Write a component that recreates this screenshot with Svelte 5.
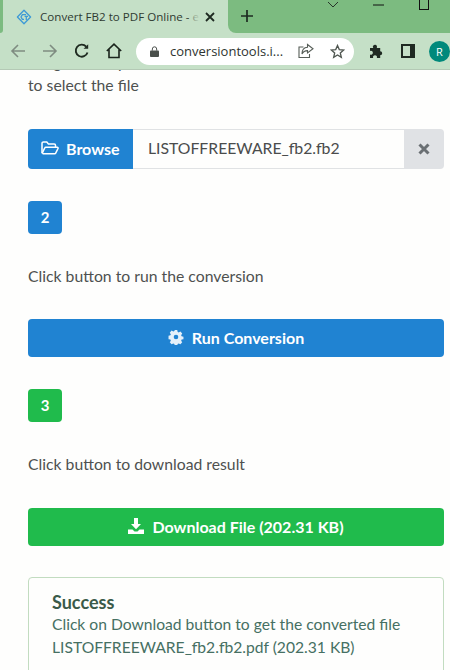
<script lang="ts">
  const fileName = 'LISTOFFREEWARE_fb2.fb2';
</script>

<div class="window">
  <header class="chrome">
    <div class="tabstrip">
      <div class="tab-edge"></div>
      <div class="tab">
        <svg class="favicon" viewBox="0 0 16 16" width="16" height="16" fill="none" stroke="#3d9ad6" stroke-width="1.3" stroke-linejoin="round">
          <path d="M8 1.200 14.600 8 8 14.800 1.400 8Z" />
          <path d="M10 5.600H6.400L5 8l1.400 2.400H8M8.600 7.400H12M10.300 7.400v3.600" />
        </svg>
        <span class="tab-title">Convert FB2 to PDF Online - e</span>
        <svg class="tab-close" viewBox="0 0 10 10" width="10" height="10" stroke="#1f2a22" stroke-width="1.8">
          <path d="M1 1l8 8M9 1l-8 8" />
        </svg>
      </div>
      <div class="tab-rest">
        <svg class="newtab" viewBox="0 0 12 12" width="12" height="12" stroke="#1d2b20" stroke-width="1.7">
          <path d="M6 0v12M0 6h12" />
        </svg>
        <div class="winctl">
          <svg viewBox="0 0 12 6" width="12" height="6" fill="none" stroke="#28352a" stroke-width="1"><path d="M1 0l5 5 5-5" /></svg>
          <svg class="minimize" viewBox="0 0 11 2" width="11" height="2" stroke="#111"><path d="M0 1h11" /></svg>
          <span class="maximize"></span>
        </div>
      </div>
    </div>
    <div class="toolbar">
      <svg class="navicon" viewBox="0 0 16 16" width="16" height="16" fill="none" stroke="#7f8c81" stroke-width="1.6">
        <path d="M15 8H2M8 2 2 8l6 6" />
      </svg>
      <svg class="navicon" viewBox="0 0 16 16" width="16" height="16" fill="none" stroke="#7f8c81" stroke-width="1.6">
        <path d="M1 8h13M8 2l6 6-6 6" />
      </svg>
      <svg class="navicon" viewBox="0 0 16 16" width="16" height="16" fill="none" stroke="#1e2a20" stroke-width="1.9">
        <path d="M13.500 9.500A6 6 0 1 1 12.200 3.600" />
        <path d="M14.200 1.200v4.600H9.600Z" fill="#1e2a20" stroke="none" />
      </svg>
      <svg class="navicon home" viewBox="0 0 16 16" width="16" height="16" fill="none" stroke="#1a241c" stroke-width="1.6">
        <path d="M.8 8 8 1.200 15.200 8M3 6.500v8h10v-8" />
      </svg>
      <div class="omnibox">
        <svg class="lock" viewBox="0 0 10 12" width="9" height="11" fill="#4a4f4b">
          <path d="M1 5h8a1 1 0 0 1 1 1v5a1 1 0 0 1-1 1H1a1 1 0 0 1-1-1V6a1 1 0 0 1 1-1Z" />
          <path d="M2.600 5V3.200a2.400 2.400 0 0 1 4.800 0V5" fill="none" stroke="#4a4f4b" stroke-width="1.1" />
        </svg>
        <span class="url">conversiontools.i...</span>
        <svg class="share" viewBox="0 0 16 16" width="16" height="16" fill="none" stroke="#565d57" stroke-width="1.1">
          <path d="M5.500 4H1v10.500h10.500V11" />
          <path d="M9.500 1.500 15 5.800 9.500 10V7.600C6.500 7.600 5 9 4 11c0-4 2-6.500 5.500-6.700Z" />
        </svg>
        <svg class="star" viewBox="0 0 16 16" width="15" height="15" fill="none" stroke="#4f5650" stroke-width="1.4">
          <path d="M8 1.600 9.900 6l4.700.4-3.600 3.100 1.100 4.700L8 11.700l-4.100 2.500L5 9.500 1.400 6.400 6.100 6Z" />
        </svg>
      </div>
      <svg class="ext" viewBox="0 0 16 16" width="16" height="16" fill="#1f2a22">
        <path d="M1 5h3.200a2 2 0 0 1 3.600-2.200c.3.700.2 1.500 0 2.200h3.400v3.200a2 2 0 1 1 0 4V15H7.800a2 2 0 1 0-3.600 0H1v-3.400a2 2 0 1 0 0-3.600Z" />
      </svg>
      <svg class="panel" viewBox="0 0 14 14" width="14" height="14">
        <path d="M0 0h14v14H0Z" fill="#1f2a22" />
        <path d="M2 2h7v10H2Z" fill="#c5e0c7" />
      </svg>
      <span class="avatar">R</span>
    </div>
  </header>

  <main class="viewport">
    <div class="page">
      <p class="hint">Drag and drop file or click here<br />to select the file</p>

      <div class="file-row">
        <button class="browse">
          <svg viewBox="0 0 18 14" width="18" height="14" fill="none" stroke="#fff" stroke-width="1.5">
            <path d="M1 12V2.400C1 1.600 1.600 1 2.400 1h3.400l1.600 2h5.800c.8 0 1.300.6 1.300 1.300V6" />
            <path d="M1 12.600 3.700 7c.2-.5.6-.8 1.200-.8h11.300c.7 0 1.100.7.8 1.300l-2.300 4.600c-.2.400-.6.600-1 .6H1.600" />
          </svg>
          Browse
        </button>
        <span class="file-name">{fileName}</span>
        <span class="clear">
          <svg viewBox="0 0 12 12" width="12" height="12" stroke="#6a6f73" stroke-width="3">
            <path d="M1.500 1.500l9 9M10.500 1.500l-9 9" />
          </svg>
        </span>
      </div>

      <span class="step blue">2</span>
      <p class="label">Click button to run the conversion</p>
      <button class="action blue">
        <svg viewBox="-1 -1 18 18" width="16" height="16">
          <path fill="#e4f0fa" fill-rule="evenodd" d="M6.600 0h2.800l.4 2.200 1.200.6 2-1 2 2.300-1.200 1.800.5 1.200 2.100.5v2.800l-2.100.5-.5 1.200 1.200 1.800-2 2.300-2-1-1.200.6-.4 2.200H6.600l-.4-2.200-1.200-.6-2 1-2-2.300 1.200-1.800-.5-1.200-2.100-.5V6.600l2.100-.5.5-1.200L1 3.100l2-2.300 2 1 1.200-.6ZM8 5.400a2.600 2.600 0 1 0 0 5.200 2.600 2.600 0 0 0 0-5.200Z" />
        </svg>
        Run Conversion
      </button>

      <span class="step green">3</span>
      <p class="label second">Click button to download result</p>
      <button class="action green">
        <svg viewBox="0 0 16 16" width="16" height="16" fill="#fff">
          <path d="M6 0h4v6h3l-5 5.200L3 6h3Z" />
          <path d="M0 11.500h4.500l2 2h3l2-2H16V16H0Z" />
        </svg>
        Download File (202.31 KB)
      </button>

      <section class="alert">
        <h4>Success</h4>
        <p>Click on Download button to get the converted file<br />{fileName}.pdf (202.31 KB)</p>
      </section>
    </div>
  </main>
</div>

<style>
  :global(body) {
    margin: 0;
    background: #fefefd;
  }
  .window {
    width: 450px;
    height: 670px;
    overflow: hidden;
    font-family: Lato, "Liberation Sans", sans-serif;
    color: #4e5150;
  }

  .chrome {
    height: 70px;
    box-sizing: border-box;
    border-bottom: 1px solid #b4c9b5;
  }
  .tabstrip {
    display: flex;
    height: 33px;
    background: #c5e0c7;
  }
  .tab-edge {
    width: 3px;
    background: #7cbb80;
    border-bottom-right-radius: 3px;
  }
  .tab {
    display: flex;
    align-items: center;
    width: 225px;
    box-sizing: border-box;
    padding: 0 13px 0 13px;
  }
  .favicon { flex-shrink: 0; margin-right: 8px; }
  .tab-title {
    position: relative;
    flex: 1;
    min-width: 0;
    margin-right: 5px;
    overflow: hidden;
    white-space: nowrap;
    font: 11.6px "Open Sans", sans-serif;
    color: #2f3b32;
  }
  /* the title fades out before the close button */
  .tab-title::after {
    content: "";
    position: absolute;
    top: 0;
    right: 0;
    bottom: 0;
    width: 11px;
    background: linear-gradient(to right, rgba(197, 224, 199, 0.3), #c5e0c7);
  }
  .tab-close { flex-shrink: 0; }
  .tab-rest {
    display: flex;
    flex: 1;
    background: #7cbb80;
    border-bottom-left-radius: 8px;
  }
  .newtab { margin: 10px 0 0 13px; }
  .winctl {
    display: flex;
    align-items: flex-start;
    gap: 34px;
    margin-left: auto;
    padding-right: 21px;
  }
  .winctl svg:first-child { margin-top: 2px; }
  .winctl .minimize { margin: 4px 1px 0 0; }
  .maximize {
    display: block;
    width: 8px;
    height: 9px;
    border: 1px solid #111;
    border-top: 0;
  }

  .toolbar {
    display: flex;
    align-items: center;
    height: 36px;
    padding: 0 0 0 10px;
    background: #c5e0c7;
  }
  .navicon { flex-shrink: 0; margin-right: 16px; }
  .home { margin-right: 14px; }
  .omnibox {
    display: flex;
    flex-shrink: 0;
    align-items: center;
    width: 218px;
    height: 27px;
    box-sizing: border-box;
    padding: 0 9px 0 14px;
    background: #fff;
    border-radius: 14px;
  }
  .lock { flex-shrink: 0; }
  .url {
    margin-left: 11px;
    font: 13px "Open Sans", sans-serif;
    color: #2e3430;
    white-space: nowrap;
  }
  .share { margin-left: auto; flex-shrink: 0; }
  .star { margin-left: 16px; flex-shrink: 0; }
  .ext { margin-left: 15px; flex-shrink: 0; }
  .panel { margin-left: 16px; flex-shrink: 0; }
  .avatar {
    flex-shrink: 0;
    width: 21px;
    height: 21px;
    margin-left: 14px;
    border-radius: 50%;
    background: #00897b;
    color: #fff;
    font: 11px/21px "Open Sans", sans-serif;
    text-align: center;
  }

  /* the page is scrolled: its first line sits half under the toolbar */
  .viewport {
    height: 600px;
    overflow: hidden;
  }
  .page {
    margin-top: -20px;
    padding: 0 6px 0 28px;
    font-size: 15.75px;
  }
  .hint {
    margin: 0 0 33px;
    line-height: 23px;
  }

  .file-row {
    display: flex;
    align-items: stretch;
    height: 40px;
    box-sizing: border-box;
    margin-bottom: 32px;
  }
  .browse {
    display: flex;
    align-items: center;
    gap: 7px;
    width: 105px;
    padding: 0 0 2px 13px;
    border: 0;
    border-radius: 4px 0 0 4px;
    background: #2083d2;
    color: #fff;
    font: bold 16px Lato, sans-serif;
  }
  .file-name {
    flex: 1;
    padding-left: 15px;
    border: solid #e0e2e4;
    border-width: 1px 0;
    line-height: 36px;
    color: #4a4c4c;
  }
  .clear {
    display: flex;
    align-items: center;
    justify-content: center;
    width: 40px;
    border-radius: 0 4px 4px 0;
    background: #e0e2e5;
  }

  .step {
    display: block;
    width: 34px;
    height: 33px;
    border-radius: 4px;
    color: #fff;
    font: bold 15px/32px Lato, sans-serif;
    text-align: center;
  }
  .label {
    margin: 30px 0 31px;
    line-height: 24px;
  }
  .label.second { margin-bottom: 32px; }
  .action {
    display: flex;
    align-items: center;
    justify-content: center;
    gap: 8px;
    width: 100%;
    height: 38px;
    margin-bottom: 32px;
    padding: 0 0 2px;
    border: 0;
    border-radius: 4px;
    color: #fff;
    font: bold 16px Lato, sans-serif;
  }
  .blue { background: #2083d2; }
  .green { background: #20bb4c; }

  .alert {
    height: 120px;
    box-sizing: border-box;
    margin-top: -1px;
    padding: 13px 23px;
    border: 1px solid #c2dcc0;
    border-radius: 4px;
    color: #467063;
    line-height: 23px;
  }
  .alert h4 {
    margin: 0;
    font-size: 18px;
    line-height: 22px;
    font-weight: bold;
    color: #3a5a49;
  }
  .alert p { margin: 0; font-size: 15.65px; }
</style>
